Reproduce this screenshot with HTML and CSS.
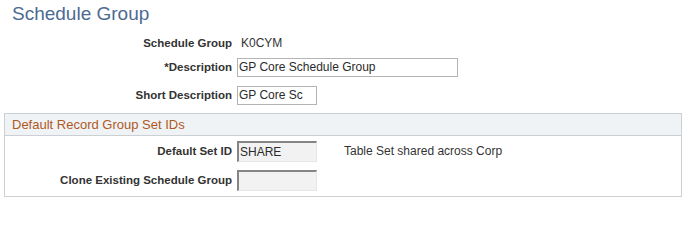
FILE: index.html
```html
<!DOCTYPE html>
<html>
<head>
<meta charset="utf-8">
<link rel="stylesheet" href="styles.css">
</head>
<body>
<h1 class="title">Schedule Group</h1>
<div class="form">
  <div class="row row-first">
    <span class="label">Schedule Group</span>
    <span class="value">K0CYM</span>
  </div>
  <div class="row">
    <span class="label">*Description</span>
    <span class="input input-long">GP Core Schedule Group</span>
  </div>
  <div class="row row-short">
    <span class="label">Short Description</span>
    <span class="input input-short">GP Core Sc</span>
  </div>
</div>
<div class="group">
  <div class="group-head">Default Record Group Set IDs</div>
  <div class="group-body">
    <div class="row grow">
      <span class="label label-in">Default Set ID</span>
      <span class="input input-ro">SHARE</span>
      <span class="desc">Table Set shared across Corp</span>
    </div>
    <div class="row grow grow-2">
      <span class="label label-in">Clone Existing Schedule Group</span>
      <span class="input input-ro"></span>
    </div>
  </div>
</div>
</body>
</html>
```

FILE: styles.css
```css
html, body {
  margin: 0;
  padding: 0;
  background: #ffffff;
}
body {
  font-family: "Liberation Sans", Arial, sans-serif;
  font-size: 12px;
  color: #333333;
  width: 688px;
  height: 203px;
  overflow: hidden;
}
.title {
  margin: 0;
  padding: 2px 0 0 12px;
  height: 29px;
  box-sizing: border-box;
  font-weight: normal;
  font-size: 19px;
  line-height: 24px;
  color: #4d6a92;
}
.form {
  display: flex;
  flex-direction: column;
}
.row {
  display: flex;
  align-items: center;
  height: 24px;
}
.row-first {
  margin-top: 2px;
}
.row-short {
  margin-top: 4px;
}
.label {
  width: 236px;
  flex: none;
  text-align: right;
  font-weight: bold;
  font-size: 11.5px;
  color: #333333;
  padding-right: 4px;
  box-sizing: border-box;
}
.label-in {
  width: 231px;
}
.value {
  padding-left: 5px;
  color: #333333;
}
.input {
  box-sizing: border-box;
  height: 19px;
  border: 1px solid #b4b4b4;
  background: #ffffff;
  padding: 0 2px 0 1px;
  line-height: 17px;
  color: #2a2a2a;
  margin-left: 1px;
  white-space: nowrap;
  overflow: hidden;
}
.input-long {
  width: 221px;
}
.input-short {
  width: 80px;
}
.input-ro {
  width: 80px;
  height: 21px;
  line-height: 18px;
  background: #f2f2f2;
  border-top: 2px solid #858585;
  border-left: 2px solid #858585;
  border-right: 1px solid #e6e6e6;
  border-bottom: 1px solid #e6e6e6;
  padding-left: 1px;
}
.group {
  margin: 6px 6px 0 4px;
  border: 1px solid #cbd0d4;
}
.group-head {
  height: 21px;
  line-height: 21px;
  padding-left: 7px;
  background: #eff3f5;
  border-bottom: 1px solid #cbd0d4;
  color: #b0591f;
  font-size: 13px;
}
.group-body {
  padding: 4px 0 5px;
}
.grow {
  height: 22px;
}
.grow-2 {
  margin-top: 7px;
}
.desc {
  margin-left: 27px;
  color: #333333;
}
```
